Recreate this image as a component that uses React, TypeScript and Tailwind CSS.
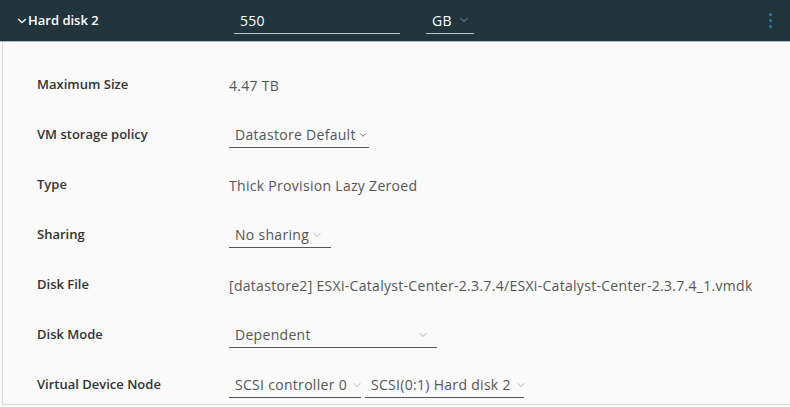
import { ChevronDown } from 'lucide-react';

const font = { fontFamily: '"Open Sans", sans-serif' };

function Select({ label, width, caretGap }: { label: string; width: string; caretGap?: boolean }) {
  return (
    <div className={`flex items-center justify-between whitespace-nowrap border-b border-[#565656] pl-1.5 pr-2 h-[26px] ${width}`}>
      <span className="text-[14px] tracking-[0.3px] text-[#565656]">{label}</span>
      <ChevronDown className={`w-3 h-3 shrink-0 text-[#9a9a9a] ${caretGap ? 'ml-1' : ''}`} strokeWidth={1.5} />
    </div>
  );
}

function Row({ label, children }: { label: string; children: React.ReactNode }) {
  return (
    <div className="flex items-center h-[50px]">
      <div className="w-[226px] shrink-0 pl-[34px] text-[13px] font-semibold text-[#333]">{label}</div>
      <div className="flex items-center whitespace-nowrap">{children}</div>
    </div>
  );
}

export default function App() {
  return (
    <div className="w-[790px] h-[407px] bg-[#fafafa] overflow-hidden" style={font}>
      <div className="h-[42px] bg-[#22343c] border-b border-[#a8b8c0] flex items-center">
        <div className="flex items-center w-[234px] pl-[15px] text-white text-[13px] font-semibold">
          <ChevronDown className="w-3.5 h-3.5 -mr-[1px]" strokeWidth={2} />
          Hard disk 2
        </div>
        <div className="w-[166px] h-[26px] border-b border-[#b6c4ca] pl-1.5 flex items-center text-[14px] tracking-[0.3px] text-white">550</div>
        <div className="ml-[26px] w-[48px] h-[26px] border-b border-[#b6c4ca] pl-1.5 flex items-center text-[14px] tracking-[0.3px] text-white">
          GB
          <ChevronDown className="w-3 h-3 ml-1.5 text-[#b6c4ca]" strokeWidth={1.5} />
        </div>
        <div className="ml-auto mr-[18px] flex flex-col gap-[3px]">
          <span className="w-[3px] h-[3px] rounded-full bg-[#1d7fa3]" />
          <span className="w-[3px] h-[3px] rounded-full bg-[#1d7fa3]" />
          <span className="w-[3px] h-[3px] rounded-full bg-[#1d7fa3]" />
        </div>
      </div>
      <div className="ml-[2px] border-l border-b border-[#d7dde0] h-[363px] pt-[18px]">
        <Row label="Maximum Size">
          <span className="text-[14px] tracking-[0.3px] text-[#565656]">4.47 TB</span>
        </Row>
        <Row label="VM storage policy">
          <div className="flex items-center border-b border-[#565656] pl-1.5 h-[26px] w-[140px]">
            <span className="text-[14px] tracking-[0.3px] text-[#565656]">Datastore Default</span>
            <ChevronDown className="w-2.5 h-2.5 ml-0.5 text-[#565656]" strokeWidth={2} />
          </div>
        </Row>
        <Row label="Type">
          <span className="text-[14px] tracking-[0.3px] text-[#565656]">Thick Provision Lazy Zeroed</span>
        </Row>
        <Row label="Sharing">
          <Select label="No sharing" width="w-[102px]" />
        </Row>
        <Row label="Disk File">
          <span className="text-[14px] tracking-[0.3px] text-[#565656]">[datastore2] ESXi-Catalyst-Center-2.3.7.4/ESXi-Catalyst-Center-2.3.7.4_1.vmdk</span>
        </Row>
        <Row label="Disk Mode">
          <Select label="Dependent" width="w-[208px]" />
        </Row>
        <Row label="Virtual Device Node">
          <div className="flex items-center gap-1">
            <Select label="SCSI controller 0" width="w-[132px]" caretGap />
            <Select label="SCSI(0:1) Hard disk 2" width="w-[159px]" caretGap />
          </div>
        </Row>
      </div>
    </div>
  );
}
